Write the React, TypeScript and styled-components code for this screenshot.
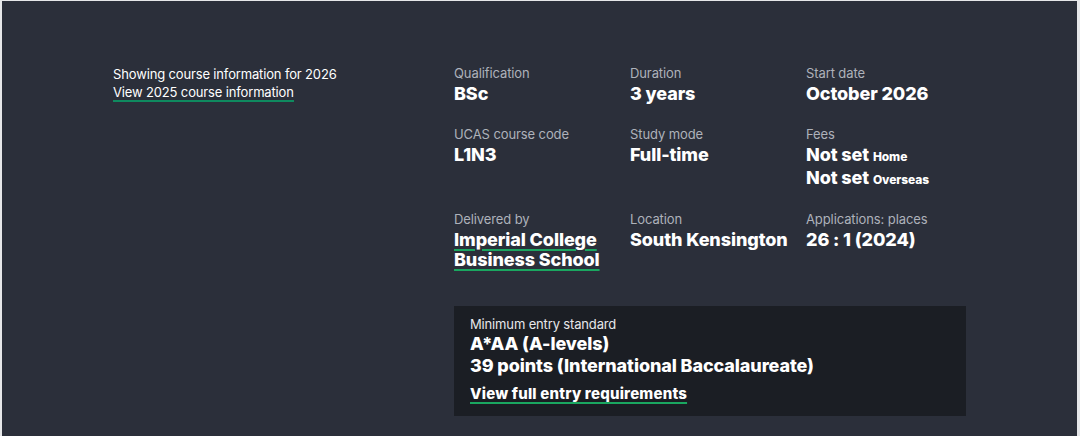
import React from "react";
import styled, { createGlobalStyle } from "styled-components";

const Global = createGlobalStyle`
  html, body { margin: 0; padding: 0; background: #e6e7e9; }
  body { font-family: Inter, "Noto Sans", Arial, sans-serif; -webkit-font-smoothing: antialiased; }
`;

const Frame = styled.div`
  margin: 1px 3px 0 2px;
  height: 435px;
  background: #2b2f3a;
  color: #ffffff;
  box-sizing: border-box;
  padding: 63px 0 0 111px;
  display: flex;
  overflow: hidden;
`;

const Side = styled.div`
  width: 341px;
  flex: none;
  padding-top: 1px;
  font-size: 13px;
  line-height: 18px;
  letter-spacing: -0.15px;
`;

const SideLink = styled.a`
  color: #fff;
  text-decoration: none;
  border-bottom: 2px solid #0f8a5f;
`;

const Main = styled.div`
  display: flex;
  flex-direction: column;
`;

const Facts = styled.div`
  display: grid;
  grid-template-columns: 176px 176px 176px;
  row-gap: 21px;
`;

const Fact = styled.div`
  display: flex;
  flex-direction: column;
`;

const Label = styled.div`
  font-size: 13px;
  line-height: 18px;
  color: #aeb2ba;
  letter-spacing: -0.1px;
  margin-bottom: 2px;
`;

const Value = styled.div<{ $gap?: number }>`
  font-size: 18px;
  line-height: 20px;
  font-weight: 800;
  letter-spacing: -0.1px;
  margin-top: ${(p) => p.$gap ?? 0}px;
  margin-bottom: ${(p) => (p.$gap ? 1 : 0)}px;
`;

const Small = styled.span`
  font-size: 12px;
  line-height: 1;
  font-weight: 800;
  letter-spacing: -0.1px;
`;

const ValueLink = styled.a`
  color: #fff;
  text-decoration: underline;
  text-decoration-color: #1aa760;
  text-decoration-thickness: 2px;
  text-underline-offset: 3px;
`;

const EntryBox = styled.div`
  margin-top: 36px;
  width: 512px;
  height: 110px;
  box-sizing: border-box;
  background: #1b1e24;
  padding: 9px 16px 0 16px;
`;

const EntryLabel = styled.div`
  font-size: 13px;
  line-height: 18px;
  color: #e6e7ea;
  letter-spacing: -0.15px;
`;

const EntryValue = styled.div`
  font-size: 18px;
  line-height: 22px;
  font-weight: 800;
  letter-spacing: -0.1px;
`;

const EntryLink = styled.a`
  display: inline-block;
  margin-top: 7px;
  font-size: 15px;
  line-height: 20px;
  font-weight: 800;
  letter-spacing: 0.2px;
  color: #fff;
  text-decoration: underline;
  text-decoration-color: #1aa760;
  text-decoration-thickness: 2px;
  text-underline-offset: 3px;
`;

export default function App() {
  return (
    <>
      <Global />
      <Frame>
        <Side>
          <div>Showing course information for 2026</div>
          <SideLink href="#">View 2025 course information</SideLink>
        </Side>
        <Main>
          <Facts>
            <Fact>
              <Label>Qualification</Label>
              <Value>BSc</Value>
            </Fact>
            <Fact>
              <Label>Duration</Label>
              <Value>3 years</Value>
            </Fact>
            <Fact>
              <Label>Start date</Label>
              <Value>October 2026</Value>
            </Fact>
            <Fact>
              <Label>UCAS course code</Label>
              <Value>L1N3</Value>
            </Fact>
            <Fact>
              <Label>Study mode</Label>
              <Value>Full-time</Value>
            </Fact>
            <Fact>
              <Label>Fees</Label>
              <Value>
                Not set <Small>Home</Small>
              </Value>
              <Value $gap={3}>
                Not set <Small>Overseas</Small>
              </Value>
            </Fact>
            <Fact>
              <Label>Delivered by</Label>
              <Value>
                <ValueLink href="#">
                  Imperial College
                  <br />
                  Business School
                </ValueLink>
              </Value>
            </Fact>
            <Fact>
              <Label>Location</Label>
              <Value>South Kensington</Value>
            </Fact>
            <Fact>
              <Label>Applications: places</Label>
              <Value>26 : 1 (2024)</Value>
            </Fact>
          </Facts>
          <EntryBox>
            <EntryLabel>Minimum entry standard</EntryLabel>
            <EntryValue>A*AA (A-levels)</EntryValue>
            <EntryValue>39 points (International Baccalaureate)</EntryValue>
            <EntryLink href="#">View full entry requirements</EntryLink>
          </EntryBox>
        </Main>
      </Frame>
    </>
  );
}
